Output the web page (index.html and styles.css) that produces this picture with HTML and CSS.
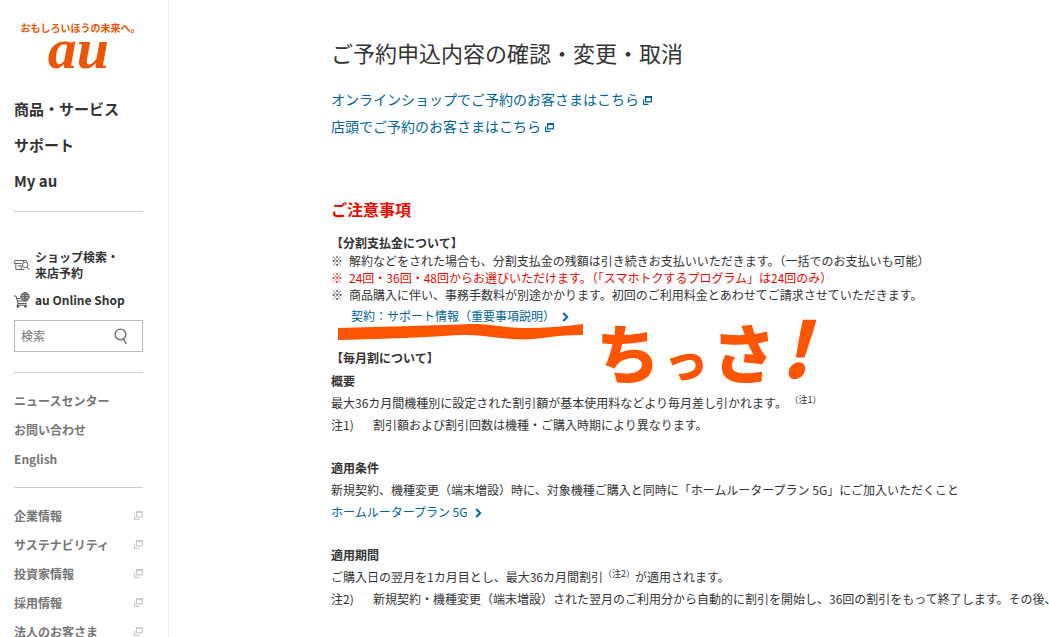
FILE: index.html
```html
<!DOCTYPE html>
<html lang="ja">
<head>
<meta charset="utf-8">
<meta name="viewport" content="width=device-width, initial-scale=1">
<title>ご予約申込内容の確認・変更・取消 | au</title>
<link rel="stylesheet" href="styles.css">
</head>
<body>
<svg class="defs" aria-hidden="true">
  <symbol id="window" viewBox="0 0 9 9"><path d="M2.6.6h5.8v5.2H2.6zM2.3 1.3h6M.6 3.5v4.9H5.5" fill="none" stroke="currentColor" stroke-width="1.2"/></symbol>
  <symbol id="chevron" viewBox="0 0 7 10"><path d="M1.2 1 5.2 5 1.2 9" fill="none" stroke="currentColor" stroke-width="2"/></symbol>
</svg>
<div class="page">
  <aside class="sidebar">
    <a class="logo" href="#">
      <span class="tagline">おもしろいほうの未来へ。</span>
      <span class="brand">au</span>
    </a>
    <nav class="primary">
      <a href="#">商品・サービス</a>
      <a href="#">サポート</a>
      <a href="#">My au</a>
    </nav>
    <div class="tools">
      <a class="tool" href="#">
        <svg class="tool-icon" viewBox="0 0 16 16" fill="none" stroke="#555" stroke-width=".9"><path d="M1 3.5h11.5v1M1 3.5.5 6.5h7.3M1.8 6.5v6h8.5M3.8 8.8h3.4v3.7M9.5 3.5v1.5"/><circle cx="11.2" cy="8" r="2.8"/><path d="m13 10.2 2.6 2.8"/></svg>
        <span>ショップ検索・<br>来店予約</span>
      </a>
      <a class="tool" href="#">
        <svg class="tool-icon" viewBox="0 0 16 16" fill="none" stroke="#444" stroke-width=".9"><path d="M0 4h2l2 7.5h8.5M3 6.5h3.5M3.5 9h9l.5-.7M4 11.5l-.8 1.7h9.5"/><circle cx="4" cy="14.4" r=".9" fill="#444"/><circle cx="11.5" cy="14.4" r=".9" fill="#444"/><circle cx="11" cy="4.8" r="4.2" fill="#ccc"/><path d="M6.8 4.8h8.4M11 .6V9M7.8 2.7h6.4M7.8 6.9h6.4"/></svg>
        <span>au Online Shop</span>
      </a>
      <form class="search" role="search">
        <input type="search" placeholder="検索" aria-label="検索">
        <button type="button" aria-label="検索する"><svg viewBox="0 0 14 17" fill="none" stroke="#666" stroke-width="1.3"><circle cx="6.5" cy="6.5" r="5.4"/><path d="m9.3 11.2 3 4.6"/></svg></button>
      </form>
    </div>
    <nav class="secondary">
      <a href="#">ニュースセンター</a>
      <a href="#">お問い合わせ</a>
      <a href="#">English</a>
    </nav>
    <nav class="secondary">
      <a href="#">企業情報<svg class="ext"><use href="#window"/></svg></a>
      <a href="#">サステナビリティ<svg class="ext"><use href="#window"/></svg></a>
      <a href="#">投資家情報<svg class="ext"><use href="#window"/></svg></a>
      <a href="#">採用情報<svg class="ext"><use href="#window"/></svg></a>
      <a href="#">法人のお客さま<svg class="ext"><use href="#window"/></svg></a>
    </nav>
  </aside>
  <main class="content">
    <h1>ご予約申込内容の確認・変更・取消</h1>
    <ul class="entries">
      <li><a href="#">オンラインショップでご予約のお客さまはこちら<svg class="ext"><use href="#window"/></svg></a></li>
      <li><a href="#">店頭でご予約のお客さまはこちら<svg class="ext"><use href="#window"/></svg></a></li>
    </ul>
    <h2>ご注意事項</h2>
    <h3 class="first">【分割支払金について】</h3>
    <ul class="notes">
      <li><span>※</span>解約などをされた場合も、分割支払金の残額は引き続きお支払いいただきます。（一括でのお支払いも可能）</li>
      <li class="alert"><span>※</span>24回・36回・48回からお選びいただけます。（「スマホトクするプログラム」は24回のみ）</li>
      <li><span>※</span>商品購入に伴い、事務手数料が別途かかります。初回のご利用料金とあわせてご請求させていただきます。</li>
    </ul>
    <p class="contract"><a href="#">契約：サポート情報（重要事項説明）<svg class="chev"><use href="#chevron"/></svg></a></p>
    <section>
      <h3>【毎月割について】</h3>
      <h4>概要</h4>
      <p>最大36カ月間機種別に設定された割引額が基本使用料などより毎月差し引かれます。 <sup>（注1）</sup></p>
      <p class="footnote"><span>注1)</span>割引額および割引回数は機種・ご購入時期により異なります。</p>
    </section>
    <section>
      <h4>適用条件</h4>
      <p>新規契約、機種変更（端末増設）時に、対象機種ご購入と同時に「ホームルータープラン 5G」にご加入いただくこと</p>
      <p><a href="#">ホームルータープラン 5G<svg class="chev"><use href="#chevron"/></svg></a></p>
    </section>
    <section>
      <h4>適用期間</h4>
      <p>ご購入日の翌月を1カ月目とし、最大36カ月間割引<sup>（注2）</sup>が適用されます。</p>
      <p class="footnote"><span>注2)</span>新規契約・機種変更（端末増設）された翌月のご利用分から自動的に割引を開始し、36回の割引をもって終了します。その後、</p>
    </section>
    <svg class="marker" viewBox="0 0 246 18" aria-hidden="true"><path d="M0 5Q36 4 72 3T133 1C158 1 165 5 190 5Q215 5 245 1V12Q225 12 212 14C185 19 165 15 145 13Q130 11 105 13T0 17Z" fill="#ff5500"/></svg>
    <p class="scribble"><span>ち</span><span class="small">っ</span><span>さ</span><span class="bang">!</span></p>
  </main>
</div>
</body>
</html>
```

FILE: styles.css
```css
* { box-sizing: border-box; }
body {
  margin: 0;
  background: #fff;
  color: #333;
  font: 12px/22px "Noto Sans CJK JP", sans-serif;
}
h1, h2, h3, h4, p, ul { margin: 0; padding: 0; }
ul { list-style: none; }
a { color: #00649c; text-decoration: none; }
.defs { position: absolute; width: 0; height: 0; }
.page { display: flex; height: 100vh; overflow: hidden; }

.sidebar {
  flex: 0 0 169px;
  min-width: 0;
  padding: 20px 25px 0 14px;
  border-right: 1px solid #eee;
}
.sidebar a { color: #333; font-weight: bold; }
.sidebar .logo {
  display: flex;
  flex-direction: column;
  align-items: center;
  color: #eb5505;
  white-space: nowrap;
}
.sidebar .tagline { font-size: 10px; line-height: 16px; padding-left: 4px; }
.brand {
  font: italic bold 58px/26px "Liberation Serif", serif;
  height: 55px;
}
.primary { display: flex; flex-direction: column; font-size: 15px; line-height: 36px; padding-bottom: 12px; }
.tools { border-top: 1px solid #ccc; padding: 37px 0 20px; }
.tool { display: flex; align-items: center; gap: 5px; line-height: 16px; margin-bottom: 11px; }
.tool-icon { width: 16px; height: 16px; flex: none; }
.search { display: flex; align-items: center; height: 32px; margin-top: 12px; border: 1px solid #bbb; }
.search input {
  flex: 1;
  width: 0;
  min-width: 0;
  border: 0;
  padding: 0 6px;
  font: inherit;
  outline: 0;
}
.search input::placeholder { color: #757575; }
.search button { width: 42px; height: 30px; padding: 0; border: 0; background: none; }
.search svg { width: 14px; height: 17px; display: block; margin: 0 auto; }
.secondary {
  display: flex;
  flex-direction: column;
  border-top: 1px solid #ccc;
  padding: 13px 0 14px;
  line-height: 29px;
}
.sidebar .secondary a { display: flex; align-items: center; justify-content: space-between; color: #757575; }
.ext { width: 9px; height: 9px; }
.secondary .ext { color: #ccc; }

.content {
  position: relative;
  flex: 1;
  min-width: 0;
  padding: 36px 0 0 162px;
  white-space: nowrap;
}
h1 { font-size: 22px; line-height: 32px; font-weight: normal; }
.entries { margin-top: 18px; font-size: 14px; line-height: 27px; }
.entries .ext { margin-left: 4px; }
h2 { margin-top: 57px; font-size: 16px; line-height: 24px; color: #eb0a00; }
h3, h4 { font-size: 12px; line-height: 23px; }
.first { margin-top: 13px; line-height: 18px; }
.notes { line-height: 17px; }
.notes span { display: inline-block; width: 18px; }
.alert { color: #eb0a00; }
.contract { margin-top: 2px; padding-left: 20px; line-height: 21px; }
.chev { width: 7px; height: 10px; margin-left: 7px; vertical-align: -1px; }
section { margin-top: 20px; }
sup { font-size: 9px; line-height: 0; }
.footnote span { display: inline-block; width: 42px; }

.marker { position: absolute; left: 169px; top: 323px; width: 246px; height: 18px; }
.scribble {
  position: absolute;
  left: 427px;
  top: 305px;
  display: flex;
  align-items: baseline;
  gap: 4px;
  color: #ff5500;
  font-size: 64px;
  font-weight: 900;
  line-height: 80px;
}
.small { font-size: 44px; }
.bang { font-size: 76px; font-style: italic; }
```
